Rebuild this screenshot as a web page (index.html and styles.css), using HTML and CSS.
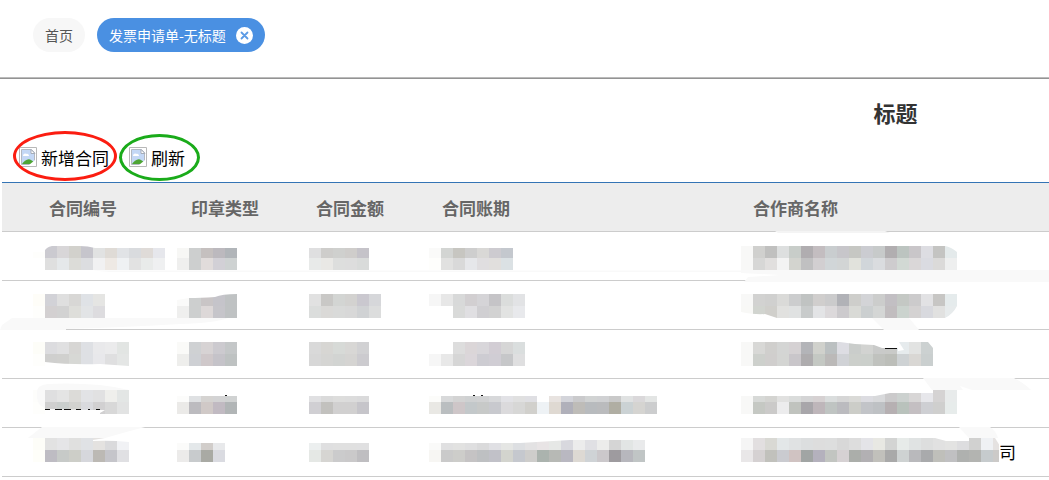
FILE: index.html
```
<!DOCTYPE html>
<html lang="zh-CN">

<head>
    <meta charset="UTF-8">
    <meta name="viewport" content="width=device-width, initial-scale=1.0">
    <title>发票申请单</title>
    <link rel="stylesheet" href="styles.css">
    <script src="mosaic.js" defer></script>
</head>

<body>
    <nav class="tabs">
        <a class="tab" href="#">首页</a>
        <div class="tab on">
            <a href="#">发票申请单-无标题</a>
            <button class="close" type="button" aria-label="关闭">
                <svg width="17" height="17" viewBox="0 0 17 17">
                    <circle cx="8.5" cy="8.5" r="8.5" fill="#fff" />
                    <path d="M5.500 5.500l6 6M11.500 5.500l-6 6" stroke="#5c9be5" stroke-width="1.800" stroke-linecap="round" />
                </svg>
            </button>
        </div>
    </nav>

    <div class="sheet">
        <h1>标题</h1>
        <div class="toolbar">
            <button class="tool add" type="button">
                <svg class="icon" width="18" height="20" viewBox="0 0 18 20">
                    <path d="M.5 .5h17v19h-17z" fill="#fff" stroke="#b8b8b8" />
                    <path d="M2.5 2.5h10l3 3v12h-13z" fill="#c4d8f6" stroke="#b3b9c2" />
                    <path d="M12 2.5v4h4z" fill="#fff" stroke="#a6adb8" />
                    <path d="M4 9c0-2 2-3 3-2 2-1 3 1 3 2z" fill="#fff" />
                    <path d="M3 17c2-3 6-6 9-4l3 2v2z" fill="#4ea435" />
                    <path d="M10 18l6-5v5z" fill="#fff" />
                </svg>
                <span>新增合同</span>
            </button>
            <button class="tool refresh" type="button">
                <svg class="icon" width="18" height="20" viewBox="0 0 18 20">
                    <path d="M.5 .5h17v19h-17z" fill="#fff" stroke="#b8b8b8" />
                    <path d="M2.5 2.5h10l3 3v12h-13z" fill="#c4d8f6" stroke="#b3b9c2" />
                    <path d="M12 2.5v4h4z" fill="#fff" stroke="#a6adb8" />
                    <path d="M4 9c0-2 2-3 3-2 2-1 3 1 3 2z" fill="#fff" />
                    <path d="M3 17c2-3 6-6 9-4l3 2v2z" fill="#4ea435" />
                    <path d="M10 18l6-5v5z" fill="#fff" />
                </svg>
                <span>刷新</span>
            </button>
        </div>

        <div class="grid">
            <table>
                <thead>
                    <tr>
                        <th class="code">合同编号</th>
                        <th class="seal">印章类型</th>
                        <th class="money">合同金额</th>
                        <th class="period">合同账期</th>
                        <th class="partner">合作商名称</th>
                    </tr>
                </thead>
                <tbody>
                    <tr>
                        <td><svg class="mosaic" data-x="31" data-y="14" data-cells="fefefc cbcad0 d8d6d8 d2d1cc c6c5cc e1e2e2 dfdbd6 e1e3e6 d9dbde dfdbd8 e6e7ec|- dfdfdf e5e8ea dcdcd8 dcdde0 f1f1f2 eee9e4 eff1f3 e2e2e2 e9ebea eff0f1"></svg></td>
                        <td><svg class="mosaic" data-x="1" data-y="14" data-cells="f7f7f5 cdcfcf c5c0bf bcb9be b1b5b9|efefee cdcfcf e1dcdb d2d0d6 ced2d2"></svg></td>
                        <td><svg class="mosaic" data-x="8" data-y="14" data-cells="dfdfe0 cecdcb cfd0ce cfcdcb c5c3c9|e8eae9 e9e8e5 dddedd dddddd d9dbda"></svg></td>
                        <td><svg class="mosaic" data-x="2" data-y="14" data-cells="fafaf9 d3d5d3 c7c6c1 cecece d9d8d6 cdcbd0 c4c8ce|fefefc e1e1e0 d9d9d9 e6e7ea e0dee0 e1dfdd dbe1e4"></svg></td>
                        <td><svg class="mosaic" data-x="3" data-y="14" data-cells="f8f8f7 d0d0ce c0c0bf dddfdf c8cdc9 b0adb0 c3bdc0 c9cdcf c7c6ca c6c7c3 cbccd1 c7caca b1aeb0 bcc4c0 c9c6c9 dddde2 c4c4c2 e4eaeb|f8f8f7 d7d7d6 e1dfde f3f3f3 d3d4cf c0c0c1 d2cfd1 d1d6d8 d2d5d5 e1e2dc d1d6da dadcdf ceccce d2d9d4 dad7d8 dadbe1 dbdad9 eeefef"></svg></td>
                    </tr>
                    <tr>
                        <td><svg class="mosaic" data-x="31" data-y="13" data-cells="fefdf8 d2d2d7 dfdfdf d8d7d5 dfe2e6 e5e5e3|fefefc d3d0d1 d2d2d2 dededa e2e4e6 dddcdf"></svg></td>
                        <td><svg class="mosaic" data-x="1" data-y="13" data-cells="fafaf9 cdcfcf c9c5c6 c5c4ca bfc2c3|efefee cdcfcf ddd8d8 c6c5ca bfc2c3"></svg></td>
                        <td><svg class="mosaic" data-x="8" data-y="13" data-cells="e1e1e1 c9c8c6 d3d5d3 d3d2d0 cac8cf d6d7da|dbdddc dad9d7 d9dad9 d8d8d8 d0d2d4 dcdddd"></svg></td>
                        <td><svg class="mosaic" data-x="2" data-y="13" data-cells="f6f6f6 e7e7e7 d8d9d9 d2cfd1 d5d4d7 c5c4c7 dbdddc e2e3e5|- - d9dad9 e0dfe2 d0cfd2 d2d2d2 e2e3e2 e8e9ec"></svg></td>
                        <td><svg class="mosaic" data-x="3" data-y="13" data-cells="f8f8f7 d2d2d1 d0d0cf dadad8 cccdce c0c3c2 d0cecd cbcbcc b1b2b7 cececb d3d4d7 cccdcc c2bfc3 c4c8c4 cccbcc e2e2e4 c7c6c4 e5ebec|f8f8f6 d1d4cf d0cfcb e1e1df e0e2e2 c8cbcb e3e4e6 dcd9db cccacd d9dad6 cbcfd0 d4d6d5 c1bdbf cbd3ce d4d2d2 d8d9de e1e1e0 e7ebec"></svg></td>
                    </tr>
                    <tr>
                        <td><svg class="mosaic" data-x="31" data-y="12" data-cells="fdfdf8 dcdcdf e0e0e1 d7d6d4 dee0e4 e9e9eb ebebec e2e5e3|fefefc cfcfce d0d0ce d7d8d5 dee0e4 e8e8eb dfdfe0 e4e6e5"></svg></td>
                        <td><svg class="mosaic" data-x="1" data-y="12" data-cells="fafaf8 cfd1d3 d7d3d4 cccacf c4c7c8|eeeeec ced0d4 cfc8ca c5c3c9 bec2c2"></svg></td>
                        <td><svg class="mosaic" data-x="8" data-y="12" data-cells="d9d9d9 d7d6d3 d7dad7 d8d7d5 d1d1d3|d7d7d7 d5d5d3 d2d4d2 d5d4d2 cccbcf"></svg></td>
                        <td><svg class="mosaic" data-x="2" data-y="12" data-cells="- - dddddd dbd6d8 d8d6da d2cdd4 d6d6d6 dadede|f6f6f6 e8e8e8 d6d6d6 dbd6da cdccd2 d0cdd4 c6c7c9 dfdfe0"></svg></td>
                        <td><svg class="mosaic" data-x="3" data-y="12" data-cells="f8f8f7 d8d8d6 d0cfcd d4d5d4 d5d1d3 b3b4b8 d0d1cc bbc0c1 dddde3 cacdcb d2d3d1 c9cac9 c9cac8 e6ebed e2e3e2 ccd1d1|f8f8f7 cdd0cc d0cecd d4d5d3 c9c6ca aeacae c4c8c3 bbb9b8 d0d2d6 cccfcb cbcfcb c0c2be bcbeb9 ced2d4 d9d7d4 cacfcf"></svg></td>
                    </tr>
                    <tr>
                        <td><svg class="mosaic" data-x="31" data-y="11" data-cells="fdfdfb dfdfe0 e4e4e4 dcdbd8 e2e3e6 e1e1e2 efefec e3e6e5|fefefc cfcfcf cacecd d2d2cf d9dade d1d0d1 d8d8d8 e2e3e3"></svg></td>
                        <td><svg class="mosaic" data-x="1" data-y="11" data-cells="fcfcfb dfe1e3 d5d3d1 d3d3d4 d0d2d2|ebeae8 bcbbbf d0c9c7 c1bac2 b1b5b6"></svg></td>
                        <td><svg class="mosaic" data-x="8" data-y="11" data-cells="e0e0e2 dadada dddddc dcdcdc dadadb|d0cfd3 c2c1be d1d0d0 d1d0d0 c6c5ca"></svg></td>
                        <td><svg class="mosaic" data-x="2" data-y="11" data-cells="fcfcfa d8d9da d3d3d3 cfd1d2 d1d2d3 d7d8da e2e2e6 e0e0e0 dfdfe3 - e8e3e0 d3d4da cacacc d1d3d3 d0d1d3 c9c9c9 e0e2e2 dad8da e3e5e4|e9e8e4 babec0 cec6c8 c3c8ca c7c9c8 c8c9ce dbdadc d7d7d6 d1d0cc eef2f5 dfd9d2 b0b0ba bebcb8 b8bbbe babbbd b0aea3 cbd2d4 d5d4d1 cccdce"></svg></td>
                        <td><svg class="mosaic" data-x="3" data-y="11" data-cells="f8f8f7 d7d9d7 d4d4d1 e1e1e0 dadcdb d4d4d5 d6d1d2 dadddd d6d6d6 dadad7 dcdce1 d8d9db cbcacb ccd1cf d8d6d6 e7e7eb d5d3d3 e8ebeb|f8f8f7 c5c8c3 cbcac9 ececed c0c3be a8a6aa beb6ba bfc4c2 bbbbbf cccdc8 c2c4c8 bec1c4 b6b0b2 b9c2bc c4bfc2 cecfd3 cfcfce e7eceb"></svg></td>
                    </tr>
                    <tr>
                        <td><svg class="mosaic" data-x="31" data-y="10" data-cells="fdfdf8 e2e2e2 e5e5e7 e0e0df e0e2e5 e4e2e0 dadadc f1f2f5|fefef9 bebcc3 c7cac8 cdcec8 d6d7dc bcb9b4 c5c5ca e0e0e3"></svg></td>
                        <td><svg class="mosaic" data-x="1" data-y="10" data-cells="fbfbfa e4e8ea d1cdca e8e9eb|ecebea c8cbcd a9aaa4 dadbe1"></svg></td>
                        <td><svg class="mosaic" data-x="8" data-y="10" data-cells="ecefef dfdfe0 e0e0e0 e0e0e0 e0e0e1|e5e8e5 d6d5d2 cbcbcc cac9ca bfbec1"></svg></td>
                        <td><svg class="mosaic" data-x="2" data-y="10" data-cells="fafaf9 e0e0e1 e2e2e1 dfdfe0 dadadb e0e0e4 e5e6e4 dddfe2 e3e2e3 e8e4e5 e6e8e6 d8d8de ececec e0e0e4 ececeb d5d5d5 e2e5e4 e9eaeb|f7f6f3 cacaca cdcdca c5c3c4 bec0c2 c1c1c8 d3d4ce c5c8ce cecdcb abb3ae b7b9b5 b9b8c1 ddd9d3 cfd3d6 cbc8cb 9e9b9f b7b7bd c0c5c5"></svg></td>
                        <td><div class="name"><svg class="mosaic" data-x="3" data-y="10" data-width="261" data-cells="f5f5f5 e2dfe0 d9d9d4 e3e7e8 e0e2e3 dcdedf dddddd dddede d8d8d8 dddddd e4e4e8 e8e8e3 d3d4d3 e7ebe9 e0e3e3 dddede e1e1e1 e3e3e2 dddddf d1d1d0 eff1f4 e5e2e1|e9e7e8 d5d1d2 c1c1bc cacbd0 d0c3c2 a1a5a4 b4b1bd c2c5c1 d6d1d3 abaeaa b2b0b3 c1c0bb a9a9a9 ced2d2 b9b9bc a9aaac bfbfba c0c0c2 afb1af b3b4b1 c6cbcd cccac8"></svg><span>司</span></div></td>
                    </tr>
                </tbody>
            </table>

            <!-- eraser strokes over the hidden values -->
            <svg class="strokes" viewBox="0 182 1049 295" preserveAspectRatio="xMinYMin slice" aria-hidden="true">
                <g fill="#fff">
                    <path d="M33 246H165V248H95Q88 246 80 246H52Q46 247 44 252H33z" />
                    <path d="M177 246H237V248H177zM309 246H369V248H309zM429 246H513V248H429z" />
                    <path d="M177 294H237Q222 294 215 297 200 298 189 298L177 300z" />
                    <path d="M45 362Q70 365 100 364L129 366V367H45z" />
                    <path d="M177 390H237V396H177zM309 390H369V396H309zM429 390H657V396H429z" />
                    <path d="M100 414V413L105 410H90L45 409V415H98z" />
                    <path d="M93 440L105 438H129V442Q110 440 93 441z" />
                    <path d="M177 438H237V443H177zM309 438H369V443H309z" />
                    <path d="M429 438H645V440H570L520 443H429z" />
                    <path d="M945 246H957V252Q951 247 945 246zM957 306V318H945Q953 314 957 306z" />
                    <path d="M741 312Q756 315 765 314L777 318H741z" />
                    <path d="M840 342H899L904 350 898 351V348H882L874 345 855 344zM928 342H933V348z" />
                    <path d="M741 390H933V393H890L875 396H741zM930 388H957V390H930z" />
                    <path d="M935 438H969V441H946zM995 438H1000V446z" />
                </g>
                <g fill="#f9f9f9">
                    <path d="M92 270.500H741V272H110zM741 270H1049V282H744L748 277 780 275 741 273z" />
                    <path d="M775 231H885L890 233H778z" fill="#f4f4f4" />
                    <path d="M2 325L12 318H228Q215 323 180 324 130 327 66 329V330H0z" />
                    <path d="M872 318H909L919 330H884z" />
                    <path d="M37 394Q36 385 48 384 95 382 129 390H45V408Q36 405 37 394z" />
                    <path d="M28 438L42 427H145L130 431 105 438z" />
                    <path d="M923 378H1014Q1025 384 1031 390H972L960 386 963 390H932z" />
                    <path d="M959 427H990Q996 431 998 438H969z" />
                </g>
                <!-- bits of text left uncovered -->
                <path d="M45 409.500h5M55 409.500h7M64 409.500h7M76 409.500h5M88 409.500h2M96 409.500h4M885 348.500h12M473 395.500h2M481 395.500h2M225 395.500h2" stroke="#111" stroke-width="1" />
            </svg>
        </div>
    </div>
</body>

</html>
```
FILE: styles.css
```
* {
    margin: 0;
    padding: 0;
    box-sizing: border-box;
}

body {
    background: #fff;
    color: #000;
    font-family: "Noto Sans CJK SC", sans-serif;
    font-size: 17px;
}

a {
    color: inherit;
    text-decoration: none;
}

button {
    border: 0;
    background: none;
    font: inherit;
    color: inherit;
    cursor: pointer;
}

.tabs {
    display: flex;
    gap: 12px;
    padding: 18px 33px 25px;
    border-bottom: 1px solid #bbb;
    box-shadow: 0 1px 0 #939393;
}

.tab {
    display: flex;
    align-items: center;
    gap: 10px;
    height: 34px;
    padding: 0 12px;
    border-radius: 17px;
    background: #f7f7f7;
    color: #555;
    font-size: 14px;
    line-height: 32px;
}

.tab.on {
    background: #4a90e2;
    color: #fff;
}

.close,
.close svg {
    display: block;
}

.sheet {
    padding-top: 18px;
}

h1 {
    padding-left: 742px;
    color: #333;
    font-size: 22px;
    line-height: 32px;
    text-align: center;
    white-space: nowrap;
}

.toolbar {
    display: flex;
    gap: 20px;
    padding: 13px 19px 9px;
}

.tool {
    position: relative;
    display: flex;
    align-items: center;
    gap: 4px;
    height: 32px;
}

.tool::after {
    content: "";
    position: absolute;
    border: 3px solid #fb1d11;
    border-radius: 50%;
}

.add::after {
    inset: -10px -8px -8px -6px;
}

.refresh::after {
    inset: -7px -15px -8px -10px;
    border-color: #1aab1a;
}

.grid {
    position: relative;
    padding-left: 2px;
}

table {
    width: 100%;
    table-layout: fixed;
    border-collapse: separate;
    border-spacing: 0;
}

th {
    height: 50px;
    padding-left: 15px;
    border-top: 1px solid #3474b5;
    border-bottom: 1px solid #ccc;
    background: #ededed;
    color: #666;
    text-align: left;
}

td {
    height: 49px;
    border-bottom: 1px solid #ccc;
    line-height: 48px;
    vertical-align: top;
}

.code {
    width: 174px;
    padding-left: 47px;
}

.seal {
    width: 125px;
}

.money {
    width: 126px;
}

.period {
    width: 311px;
}

.mosaic {
    display: block;
    flex-shrink: 0;
    height: 48px;
}

.name {
    display: flex;
}

.strokes {
    position: absolute;
    top: 0;
    left: 0;
    width: 100%;
    height: 295px;
    pointer-events: none;
}
```
FILE: mosaic.js
```
var size = 12,
    ns = 'http://www.w3.org/2000/svg',
    list = document.querySelectorAll('.mosaic');

// draw the blocks that hide each value
for (var i = 0; i < list.length; i++) {
    draw(list[i]);
}

function draw(svg) {
    var x = Number(svg.dataset.x),
        y = Number(svg.dataset.y),
        rows = svg.dataset.cells.split('|'),
        count = rows[0].split(' ').length;

    svg.setAttribute('width', svg.dataset.width || x + count * size);
    rows.forEach(function(row, r) {
        row.split(' ').forEach(function(color, c) {
            if (color === '-') {
                return;
            }
            var rect = document.createElementNS(ns, 'rect');
            rect.setAttribute('x', x + c * size);
            rect.setAttribute('y', y + r * size);
            rect.setAttribute('width', size);
            rect.setAttribute('height', size);
            rect.setAttribute('fill', '#' + color);
            svg.appendChild(rect);
        });
    });
}
```
